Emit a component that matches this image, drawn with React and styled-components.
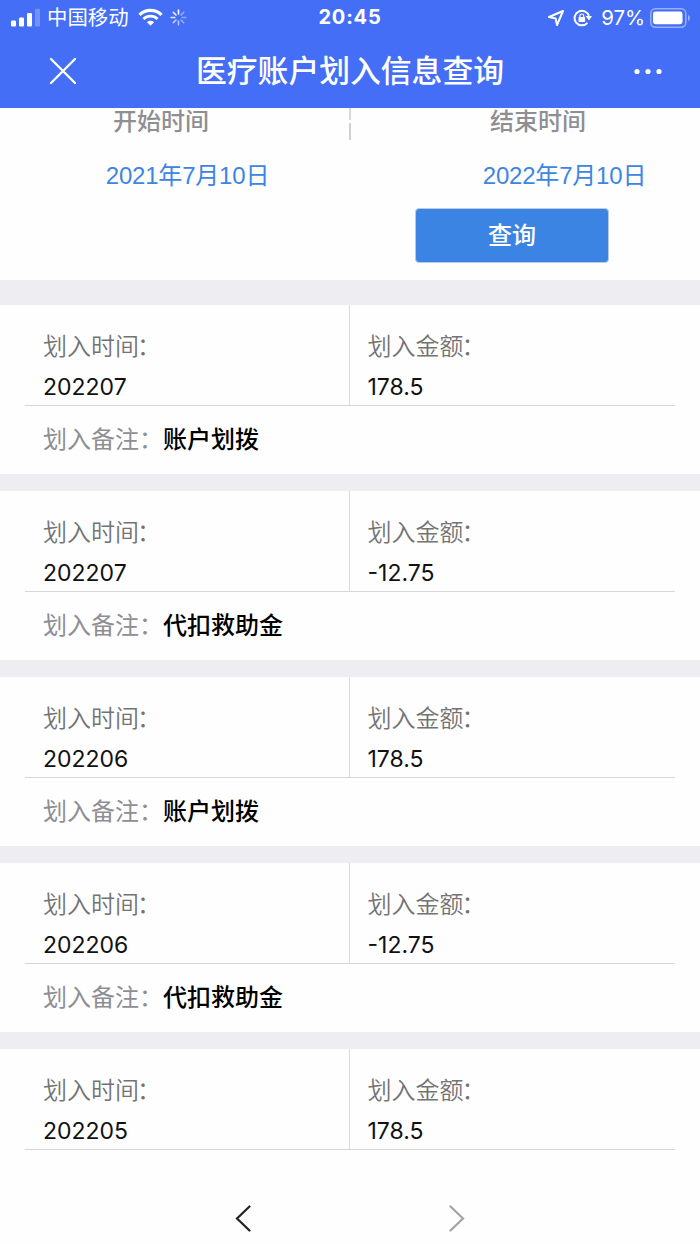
import styled, { createGlobalStyle } from "styled-components";

const records = [
  { month: "202207", amount: "178.5", remark: "账户划拨" },
  { month: "202207", amount: "-12.75", remark: "代扣救助金" },
  { month: "202206", amount: "178.5", remark: "账户划拨" },
  { month: "202206", amount: "-12.75", remark: "代扣救助金" },
  { month: "202205", amount: "178.5" },
];

const SignalIcon = () => (
  <svg width="30" height="20" viewBox="0 0 30 20" fill="#fff">
    <rect x="0" y="12.5" width="5" height="6" rx="1.3" />
    <rect x="8" y="9.5" width="5" height="9" rx="1.3" />
    <rect x="16" y="5" width="5" height="13.5" rx="1.3" />
    <rect x="24" y="0.8" width="5" height="17.7" rx="1.3" opacity="0.25" />
  </svg>
);

const WifiIcon = () => (
  <svg width="25" height="19" viewBox="0 0 26 20" fill="none" stroke="#fff">
    <path d="M1.4 7.2a16.5 16.5 0 0 1 23.2 0" strokeWidth="3.3" />
    <path d="M5.6 11.6a10.5 10.5 0 0 1 14.8 0" strokeWidth="3" />
    <path
      d="M13 18.8l-3.8-3.8a5.4 5.4 0 0 1 7.6 0z"
      fill="#fff"
      stroke="none"
    />
  </svg>
);

const spokes = [1, 0.45, 0.4, 0.45, 0.6, 0.7, 0.85, 0.95];

const SpinnerIcon = () => (
  <svg width="17" height="17" viewBox="0 0 18 18" stroke="#fff">
    {spokes.map((opacity, i) => (
      <path
        key={i}
        d="M9 1.2v4"
        strokeWidth="1.7"
        strokeLinecap="round"
        opacity={opacity}
        transform={`rotate(${i * 45} 9 9)`}
      />
    ))}
  </svg>
);

const LocationIcon = () => (
  <svg width="18" height="18" viewBox="0 0 18 18" fill="none">
    <path
      d="M16 2L2 8l6.6 1.4L10 16z"
      stroke="#fff"
      strokeWidth="2"
      strokeLinejoin="round"
    />
  </svg>
);

const RotationLockIcon = () => (
  <svg width="20" height="18" viewBox="0 0 20 18" fill="none">
    <path
      d="M15.9 7A7.3 7.3 0 1 0 14.4 13.8"
      stroke="#fff"
      strokeWidth="2"
    />
    <path d="M12.6 7h6.4l-3 4.4z" fill="#fff" />
    <rect x="5.5" y="8" width="6.6" height="5" rx="0.8" fill="#fff" />
    <path d="M6.9 8.4V6.9a1.9 1.9 0 0 1 3.8 0v1.5" stroke="#fff" strokeWidth="1.2" />
  </svg>
);

const BatteryIcon = () => (
  <svg width="41" height="20" viewBox="0 0 41 20" fill="none">
    <rect
      x="0.8"
      y="0.8"
      width="35"
      height="18.4"
      rx="4.6"
      stroke="#fff"
      strokeOpacity="0.45"
      strokeWidth="1.5"
    />
    <rect x="3" y="3.6" width="29.5" height="12.6" rx="2.4" fill="#fff" />
    <path d="M38 7v6a3.4 3.4 0 0 0 0-6z" fill="#fff" opacity="0.5" />
  </svg>
);

const CloseIcon = () => (
  <svg width="28" height="28" viewBox="0 0 28 28">
    <path
      d="M2 2l24 24M26 2L2 26"
      stroke="#fff"
      strokeWidth="2.3"
      strokeLinecap="round"
    />
  </svg>
);

const MoreIcon = () => (
  <svg width="30" height="8" viewBox="0 0 30 8" fill="#fff">
    <circle cx="4" cy="4.5" r="2.6" />
    <circle cx="15" cy="4.5" r="2.6" />
    <circle cx="26" cy="4.5" r="2.6" />
  </svg>
);

const App = () => {
  return (
    <Screen>
      <GlobalStyle />
      <Header>
        <StatusBar>
          <StatusLeft>
            <SignalIcon />
            <Carrier>中国移动</Carrier>
            <WifiIcon />
            <SpinnerIcon />
          </StatusLeft>
          <Clock>20:45</Clock>
          <StatusRight>
            <LocationIcon />
            <RotationLockIcon />
            <Percent>97%</Percent>
            <BatteryIcon />
          </StatusRight>
        </StatusBar>
        <TitleBar>
          <IconButton aria-label="关闭">
            <CloseIcon />
          </IconButton>
          <Title>医疗账户划入信息查询</Title>
          <IconButton aria-label="更多">
            <MoreIcon />
          </IconButton>
        </TitleBar>
      </Header>

      <Filter>
        <DateColumns>
          <DateColumn $indent={26}>
            <DateLabel>开始时间</DateLabel>
            <DateValue>2021年7月10日</DateValue>
          </DateColumn>
          <Divider>
            <DividerTop />
            <DividerBottom />
          </Divider>
          <DateColumn $indent={78}>
            <DateLabel>结束时间</DateLabel>
            <DateValue>2022年7月10日</DateValue>
          </DateColumn>
        </DateColumns>
        <QueryButton>查询</QueryButton>
      </Filter>

      <List>
        {records.map((record, i) => (
          <Card key={i}>
            <Summary>
              <Cell $first>
                <Label>
                  划入时间<Colon>：</Colon>
                </Label>
                <Value>{record.month}</Value>
              </Cell>
              <Cell>
                <Label>
                  划入金额<Colon>：</Colon>
                </Label>
                <Value>{record.amount}</Value>
              </Cell>
            </Summary>
            {record.remark && (
              <Remark>
                <RemarkLabel>划入备注：</RemarkLabel>
                <RemarkText>{record.remark}</RemarkText>
              </Remark>
            )}
          </Card>
        ))}
      </List>

      <Pager>
        <PagerButton aria-label="上一页" $color="#222">
          <svg width="18" height="28" viewBox="0 0 18 28" fill="none">
            <path
              d="M15.5 2.5L3 14.5l12.5 12"
              stroke="currentColor"
              strokeWidth="2.2"
              strokeLinecap="round"
            />
          </svg>
        </PagerButton>
        <PagerButton aria-label="下一页" $color="#a3a3a3">
          <svg width="18" height="28" viewBox="0 0 18 28" fill="none">
            <path
              d="M2.5 2.5L15 14.5L2.5 26.5"
              stroke="currentColor"
              strokeWidth="2.2"
              strokeLinecap="round"
            />
          </svg>
        </PagerButton>
      </Pager>
    </Screen>
  );
};

//styled components

const GlobalStyle = createGlobalStyle`
  * {
    box-sizing: border-box;
  }

  body {
    margin: 0;
    font-family: Inter, "Noto Sans CJK SC", sans-serif;
    background: #fff;
  }

  svg {
    display: block;
    flex-shrink: 0;
  }

  button {
    padding: 0;
    border: none;
    background: none;
    font-family: inherit;
  }
`;

const Screen = styled.div`
  display: flex;
  flex-direction: column;
  width: 700px;
  height: 1244px;
  overflow: hidden;
  background: #fefefe;
`;

const Header = styled.header`
  flex: none;
  height: 108px;
  color: #fff;
  background: #446ef6;
`;

const StatusBar = styled.div`
  display: grid;
  grid-template-columns: 1fr auto 1fr;
  align-items: center;
  height: 34px;
  padding: 0 9px 0 11px;
`;

const StatusLeft = styled.div`
  display: flex;
  align-items: center;
  height: 34px;

  svg:nth-of-type(2) {
    margin: 0 7px 0 9px;
  }
`;

const Carrier = styled.span`
  margin-left: 6px;
  padding-top: 1px;
  font-size: 20.4px;
  line-height: 34px;
`;

const Clock = styled.span`
  margin-left: -2px;
  font-size: 20px;
  font-weight: 700;
  line-height: 35px;
  letter-spacing: 0.8px;
`;

const StatusRight = styled.div`
  display: flex;
  align-items: center;
  justify-content: flex-end;
  gap: 8px;
  height: 34px;

  svg:last-child {
    margin-left: -3px;
  }
`;

const Percent = styled.span`
  font-size: 20.4px;
  line-height: 35px;
`;

const TitleBar = styled.div`
  display: grid;
  grid-template-columns: 60px 1fr 60px;
  align-items: center;
  height: 74px;
  padding: 0 37px 0 49px;
`;

const IconButton = styled.button`
  display: flex;
  align-items: center;
  height: 74px;

  &:last-child {
    justify-content: flex-end;
  }
`;

const Title = styled.h1`
  margin: 0 12px 0 0;
  font-size: 30.8px;
  font-weight: 500;
  line-height: 74px;
  text-align: center;
  white-space: nowrap;
`;

const Filter = styled.section`
  display: flex;
  flex: none;
  flex-direction: column;
  height: 172px;
`;

const DateColumns = styled.div`
  display: grid;
  grid-template-columns: 349px 2px 349px;
`;

const DateColumn = styled.div`
  display: flex;
  flex-direction: column;
  align-items: center;
  padding-left: ${(props) => props.$indent}px;
`;

const DateLabel = styled.span`
  margin-left: -53px;
  font-size: 24px;
  font-weight: 500;
  line-height: 28px;
  color: #8e8e93;
`;

const DateValue = styled.span`
  margin-top: 22px;
  font-family: "Liberation Sans", "Noto Sans CJK SC", sans-serif;
  font-size: 24px;
  line-height: 36px;
  letter-spacing: -0.2px;
  color: #3d85e3;
`;

const Divider = styled.div`
  display: flex;
  flex-direction: column;
  gap: 3px;
`;

const DividerTop = styled.div`
  width: 1.5px;
  height: 12px;
  background: #d8d8da;
`;

const DividerBottom = styled.div`
  width: 1.5px;
  height: 17px;
  background: #d0d0d2;
`;

const QueryButton = styled.button`
  width: 194px;
  height: 55px;
  margin: 14px 0 0 415px;
  padding-bottom: 4px;
  border: 1.5px solid #b7cbe5;
  border-radius: 4px;
  background: #3c84e4;
  font-size: 24px;
  font-weight: 500;
  color: #fff;
`;

const List = styled.main`
  display: flex;
  flex: none;
  flex-direction: column;
  gap: 17px;
  padding-top: 25px;
  background: #eeedf2;
`;

const Card = styled.article`
  background: #fefefe;
`;

const Summary = styled.div`
  display: grid;
  grid-template-columns: 324px 325px;
  height: 101px;
  margin: 0 25px;
  border-bottom: 1.5px solid #d6d6d8;
`;

const Cell = styled.div`
  display: flex;
  flex-direction: column;
  padding: 24px 0 0 ${(props) => (props.$first ? "18px" : "17.5px")};
  border-left: ${(props) => (props.$first ? "none" : "1.5px solid #dcdcde")};
`;

const Label = styled.span`
  font-size: 24px;
  font-weight: 350;
  line-height: 36px;
  color: #737373;
`;

const Colon = styled.span`
  margin-left: -2px;
`;

const Value = styled.span`
  margin-top: 4px;
  font-size: 23px;
  line-height: 36px;
  color: #111;
`;

const Remark = styled.div`
  display: flex;
  align-items: center;
  height: 68px;
  padding: 0 0 5px 43px;
  font-size: 24px;
  font-weight: 500;
`;

const RemarkLabel = styled.span`
  font-weight: 400;
  color: #8e8e93;
`;

const RemarkText = styled.span`
  color: #000;
`;

const Pager = styled.nav`
  display: flex;
  justify-content: space-between;
  margin: 54px 234px 0;
`;

const PagerButton = styled.button`
  height: 28px;
  color: ${(props) => props.$color};
`;

export default App;
